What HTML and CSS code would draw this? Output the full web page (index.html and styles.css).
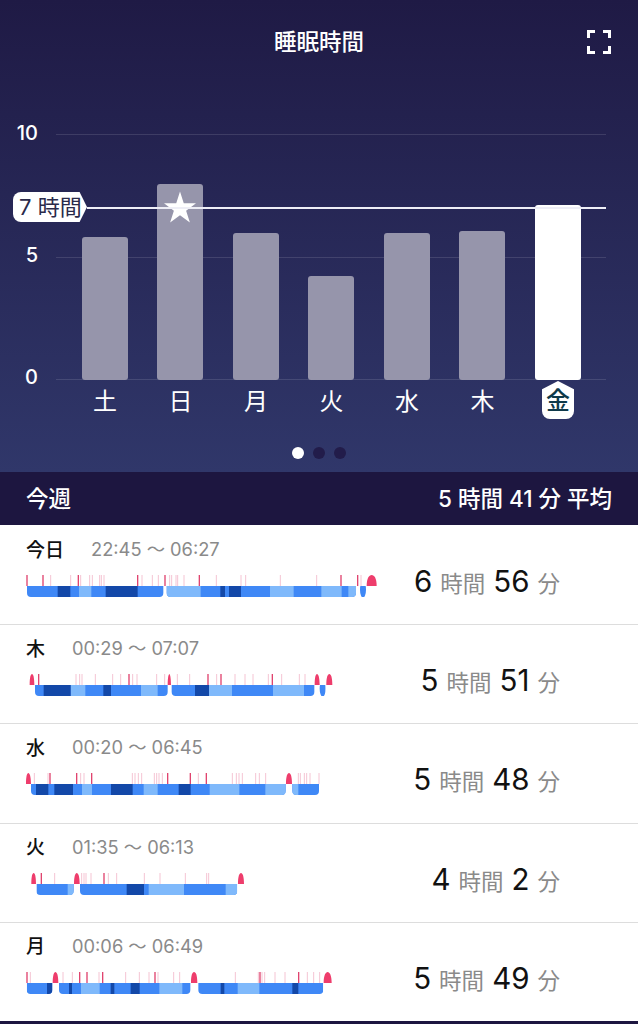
FILE: index.html
```html
<!DOCTYPE html>
<html lang="ja">
<head>
    <meta charset="UTF-8">
    <meta name="viewport" content="width=device-width, initial-scale=1.0">
    <title>睡眠時間</title>
    <link rel="stylesheet" href="styles.css">
</head>
<body>
    <section class="hero">
        <header class="hero-head">
            <h1>睡眠時間</h1>
            <svg class="expand" width="24" height="24" viewBox="0 0 24 24">
                <path d="M1.5 8V1.5H8M16 1.5H22.5V8M22.5 16V22.5H16M8 22.5H1.5V16"/>
            </svg>
        </header>

        <div class="plot">
            <div class="grid-line line-10"><span>10</span></div>
            <div class="grid-line line-5"><span>5</span></div>
            <div class="grid-line line-0"><span>0</span></div>

            <div class="bars">
                <div class="bar" style="height: 143px"></div>
                <div class="bar" style="height: 196px">
                    <svg class="star" width="32" height="32" viewBox="0 0 34 33">
                        <polygon points="17,0 21,12.5 34,12.5 23.5,20.5 27.5,33 17,25.3 6.5,33 10.5,20.5 0,12.5 13,12.5"/>
                    </svg>
                </div>
                <div class="bar" style="height: 147px"></div>
                <div class="bar" style="height: 104px"></div>
                <div class="bar" style="height: 147px"></div>
                <div class="bar" style="height: 149px"></div>
                <div class="bar current" style="height: 175px"></div>
            </div>

            <div class="goal">
                <span class="goal-tag">7 時間</span>
            </div>
        </div>

        <div class="days">
            <span>土</span>
            <span>日</span>
            <span>月</span>
            <span>火</span>
            <span>水</span>
            <span>木</span>
            <span class="today">金</span>
        </div>

        <div class="dots">
            <i class="on"></i>
            <i></i>
            <i></i>
        </div>
    </section>

    <div class="summary">
        <span>今週</span>
        <span>5 時間 41 分 平均</span>
    </div>

    <main class="nights">
        <article class="night">
            <div class="night-info">
                <p class="night-head"><strong>今日</strong><span>22:45 〜 06:27</span></p>
                <svg class="stages" width="370" height="22" viewBox="0 0 1110 66">
                    <defs>
                        <clipPath id="clip1">
                            <rect x="36" y="10" width="409" height="56" rx="12"/>
                            <rect x="455" y="10" width="568" height="56" rx="12"/>
                            <ellipse cx="1044" cy="44" rx="9" ry="24"/>
                        </clipPath>
                    </defs>
                    <path class="tick" d="M107 0V33M167 0V33M197 0V33M224 0V33M232 0V33M254 0V33M259 0V33M267 0V33M381 0V33M412 0V33M430 0V33M464 0V33M470 0V33M483 0V33M488 0V33M507 0V33M604 0V33M678 0V33M692 0V33M796 0V33M905 0V33M1038 0V33"/>
                    <path class="tick-strong" d="M36 0V33M84 0V33M190 0V33M368 0V33M450 0V33M553 0V33M978 0V33M1028 0V33"/>
                    <path class="hump" d="M1055 33C1055 10 1062 0 1070 0C1078 0 1085 10 1085 33Z"/>
                    <g clip-path="url(#clip1)">
                        <path class="mid" d="M36 49.5H1060"/>
                        <path class="light" d="M192 49.5H229M455 49.5H557M765 49.5H836M919 49.5H980M1000 49.5H1023"/>
                        <path class="deep" d="M128 49.5H166M272 49.5H368M616 49.5H630M642 49.5H678"/>
                    </g>
                </svg>
            </div>
            <p class="total"><b>6</b><span>時間</span><b>56</b><span>分</span></p>
        </article>

        <article class="night">
            <div class="night-info">
                <p class="night-head"><strong>木</strong><span>00:29 〜 07:07</span></p>
                <svg class="stages" width="370" height="22" viewBox="0 0 1110 66">
                    <defs>
                        <clipPath id="clip2">
                            <rect x="60" y="10" width="398" height="56" rx="12"/>
                            <rect x="470" y="10" width="428" height="56" rx="12"/>
                            <ellipse cx="923" cy="44" rx="9" ry="24"/>
                        </clipPath>
                    </defs>
                    <path class="tick" d="M183 0V33M194 0V33M201 0V33M241 0V33M293 0V33M317 0V33M353 0V33M366 0V33M425 0V33M449 0V33M487 0V33M524 0V33M605 0V33M660 0V33M690 0V33M714 0V33M760 0V33M800 0V33M853 0V33M870 0V33"/>
                    <path class="tick-strong" d="M71 0V33M342 0V33M579 0V33M618 0V33M772 0V33"/>
                    <path class="hump" d="M44 33C44 10 47 0 51 0C55 0 58 10 58 33ZM458 33C458 10 461 0 463 0C465 0 468 10 468 33ZM899 33C899 10 902 0 906 0C910 0 914 10 914 33ZM934 33C934 10 938 0 943 0C948 0 952 10 952 33Z"/>
                    <g clip-path="url(#clip2)">
                        <path class="mid" d="M60 49.5H940"/>
                        <path class="light" d="M167 49.5H211M378 49.5H428M582 49.5H651M774 49.5H867"/>
                        <path class="deep" d="M86 49.5H167M265 49.5H288M540 49.5H582"/>
                    </g>
                </svg>
            </div>
            <p class="total"><b>5</b><span>時間</span><b>51</b><span>分</span></p>
        </article>

        <article class="night">
            <div class="night-info">
                <p class="night-head"><strong>水</strong><span>00:20 〜 06:45</span></p>
                <svg class="stages" width="370" height="22" viewBox="0 0 1110 66">
                    <defs>
                        <clipPath id="clip3">
                            <rect x="48" y="10" width="764" height="56" rx="12"/>
                            <rect x="832" y="10" width="80" height="56" rx="12"/>
                        </clipPath>
                    </defs>
                    <path class="tick" d="M58 0V33M99 0V33M197 0V33M207 0V33M352 0V33M360 0V33M370 0V33M380 0V33M418 0V33M425 0V33M432 0V33M442 0V33M550 0V33M652 0V33M664 0V33M672 0V33M682 0V33M722 0V33M733 0V33M752 0V33M850 0V33M856 0V33M868 0V33M875 0V33M885 0V33M912 0V33"/>
                    <path class="tick-strong" d="M105 0V33M185 0V33M230 0V33M458 0V33M526 0V33M574 0V33"/>
                    <path class="hump" d="M33 33C33 10 36 0 40 0C44 0 48 10 48 33ZM813 33C813 10 817 0 822 0C827 0 831 10 831 33Z"/>
                    <g clip-path="url(#clip3)">
                        <path class="mid" d="M48 49.5H912"/>
                        <path class="light" d="M201 49.5H231M386 49.5H428M584 49.5H673M751 49.5H812M832 49.5H850"/>
                        <path class="deep" d="M63 49.5H100M118 49.5H174M288 49.5H353M491 49.5H527"/>
                    </g>
                </svg>
            </div>
            <p class="total"><b>5</b><span>時間</span><b>48</b><span>分</span></p>
        </article>

        <article class="night">
            <div class="night-info">
                <p class="night-head"><strong>火</strong><span>01:35 〜 06:13</span></p>
                <svg class="stages" width="370" height="22" viewBox="0 0 1110 66">
                    <defs>
                        <clipPath id="clip4">
                            <rect x="64" y="10" width="112" height="56" rx="12"/>
                            <rect x="195" y="10" width="472" height="56" rx="12"/>
                        </clipPath>
                    </defs>
                    <path class="tick" d="M119 0V33M200 0V33M207 0V33M213 0V33M228 0V33M280 0V33M305 0V33M388 0V33M435 0V33M511 0V33M575 0V33M581 0V33"/>
                    <path class="tick-strong" d="M79 0V33M267 0V33"/>
                    <path class="hump" d="M49 33C49 10 52 0 56 0C60 0 63 10 63 33ZM177 33C177 10 181 0 185 0C190 0 194 10 194 33ZM669 33C669 10 673 0 678 0C683 0 687 10 687 33Z"/>
                    <g clip-path="url(#clip4)">
                        <path class="mid" d="M64 49.5H667"/>
                        <path class="light" d="M158 49.5H176M401 49.5H507M632 49.5H667"/>
                        <path class="deep" d="M335 49.5H387"/>
                    </g>
                </svg>
            </div>
            <p class="total"><b>4</b><span>時間</span><b>2</b><span>分</span></p>
        </article>

        <article class="night">
            <div class="night-info">
                <p class="night-head"><strong>月</strong><span>00:06 〜 06:49</span></p>
                <svg class="stages" width="370" height="22" viewBox="0 0 1110 66">
                    <defs>
                        <clipPath id="clip5">
                            <rect x="35" y="10" width="77" height="56" rx="12"/>
                            <rect x="132" y="10" width="394" height="56" rx="12"/>
                            <rect x="550" y="10" width="375" height="56" rx="12"/>
                        </clipPath>
                    </defs>
                    <path class="tick" d="M46 0V33M144 0V33M172 0V33M252 0V33M332 0V33M373 0V33M402 0V33M429 0V33M476 0V33M494 0V33M661 0V33M730 0V33M741 0V33M749 0V33M780 0V33M810 0V33M877 0V33M896 0V33M914 0V33"/>
                    <path class="tick-strong" d="M36 0V33M194 0V33M216 0V33M263 0V33M420 0V33M735 0V33M851 0V33"/>
                    <path class="hump" d="M113 33C113 10 117 0 121 0C126 0 130 10 130 33ZM528 33C528 10 532 0 537 0C543 0 547 10 547 33ZM926 33C926 10 932 0 938 0C944 0 950 10 950 33Z"/>
                    <g clip-path="url(#clip5)">
                        <path class="mid" d="M35 49.5H925"/>
                        <path class="light" d="M198 49.5H254M433 49.5H502M668 49.5H733"/>
                        <path class="deep" d="M96 49.5H112M162 49.5H171M287 49.5H298M347 49.5H374M617 49.5H628M832 49.5H850"/>
                    </g>
                </svg>
            </div>
            <p class="total"><b>5</b><span>時間</span><b>49</b><span>分</span></p>
        </article>
    </main>

    <div class="page-end"></div>
</body>
</html>
```
FILE: styles.css
```css
html, body {
    margin: 0;
    padding: 0;
}
body {
    font-family: "Inter", "Noto Sans CJK JP", sans-serif;
    background-color: #fff;
    overflow: hidden;
}
p, h1 {
    margin: 0;
}

/* chart area */
.hero {
    height: 472px;
    background: linear-gradient(#1f1a45, #30376a);
    color: #fff;
    display: flex;
    flex-direction: column;
}
.hero-head {
    position: relative;
    height: 79px;
    display: flex;
    justify-content: center;
    align-items: center;
}
.hero-head h1 {
    font-size: 22.5px;
    font-weight: 500;
}
.expand {
    position: absolute;
    right: 27px;
    top: 30px;
}
.expand path {
    fill: none;
    stroke: #fff;
    stroke-width: 3;
}

.plot {
    position: relative;
    height: 246px;
    margin: 55px 32px 0 56px;
}
.grid-line {
    position: absolute;
    left: 0;
    right: 0;
    height: 1px;
    background-color: rgba(255, 255, 255, 0.12);
}
.line-10 { top: 0; }
.line-5 { top: 123px; }
.line-0 { top: 245px; }
.grid-line span {
    position: absolute;
    right: 100%;
    margin-right: 18px;
    top: -12px;
    font-size: 20px;
    line-height: 22px;
    font-weight: 500;
}
.line-5 span,
.line-0 span {
    top: -13px;
}
.bars {
    position: absolute;
    left: 25.9px;
    right: 25.1px;
    bottom: 0;
    display: flex;
    justify-content: space-between;
    align-items: flex-end;
}
.bar {
    position: relative;
    width: 46px;
    border-radius: 3px;
    background-color: #9695ab;
}
.bar.current {
    background-color: #fff;
}
.star {
    position: absolute;
    left: 7px;
    top: 7px;
    fill: #fff;
}
.goal {
    position: absolute;
    left: 31px;
    right: 0;
    top: 73px;
    height: 2px;
    background-color: #eeeef6;
}
.goal-tag {
    position: absolute;
    right: 100%;
    top: -15px;
    width: 74px;
    height: 30px;
    padding-left: 6px;
    box-sizing: border-box;
    background-color: #fff;
    color: #2a2a4a;
    font-size: 22px;
    line-height: 30px;
    white-space: nowrap;
    border-radius: 8px 0 0 8px;
    clip-path: polygon(0 0, 90% 0, 100% 50%, 90% 100%, 0 100%);
}

.days {
    display: flex;
    justify-content: space-between;
    margin: 0 57px 0 82px;
    height: 40px;
}
.days span {
    width: 46px;
    text-align: center;
    font-size: 24px;
    line-height: 43px;
}
.days .today {
    position: relative;
    width: 32px;
    margin: 1px 7px 0;
    height: 38px;
    line-height: 39px;
    font-weight: 500;
    background-color: #fff;
    color: #0f3a4a;
    border-radius: 8px;
    clip-path: polygon(50% 0, 100% 22%, 100% 100%, 0 100%, 0 22%);
}
.dots {
    display: flex;
    justify-content: center;
    gap: 9px;
    margin: 27px 0 0;
}
.dots i {
    width: 12px;
    height: 12px;
    border-radius: 50%;
    background-color: #221c4a;
}
.dots .on {
    background-color: #fff;
}

.summary {
    height: 53px;
    padding: 0 26px 4px;
    box-sizing: border-box;
    background-color: #1d1640;
    color: #fff;
    font-size: 22.5px;
    font-weight: 500;
    display: flex;
    justify-content: space-between;
    align-items: center;
}

/* list of nights */
.nights {
    padding-top: 1px;
}
.night {
    height: 99.2px;
    box-sizing: border-box;
    border-bottom: 1px solid #ddd;
    padding-right: 78px;
    display: flex;
    justify-content: space-between;
}
.night:last-child {
    height: 98.2px;
    border-bottom: none;
}
.night-info {
    padding-top: 9px;
}
.night-head {
    display: flex;
    align-items: center;
    gap: 27px;
    height: 26px;
    padding-left: 26px;
    font-size: 18.3px;
}
.night-head strong {
    font-size: 19px;
    font-weight: 500;
    color: #111;
}
.night-head span {
    color: #8a8a8a;
}
.stages {
    display: block;
    margin: 14px 0 0 15px;
}
.stages path {
    fill: none;
}
.stages .tick {
    stroke: #f5c4d3;
    stroke-width: 3;
}
.stages .tick-strong {
    stroke: #e0446f;
    stroke-width: 4;
}
.stages .hump {
    fill: #ee3d6c;
}
.stages .mid,
.stages .light,
.stages .deep {
    stroke-width: 33;
}
.stages .mid { stroke: #3f88f6; }
.stages .light { stroke: #7fb9fb; }
.stages .deep { stroke: #1348a8; }

.total {
    display: flex;
    align-items: baseline;
    gap: 8px;
    padding-top: 37px;
    color: #8a8a8a;
    font-size: 22.5px;
}
.total b {
    font-size: 29.5px;
    font-weight: 400;
    color: #111;
}
.page-end {
    height: 3px;
    background-color: #1d1640;
}
```
